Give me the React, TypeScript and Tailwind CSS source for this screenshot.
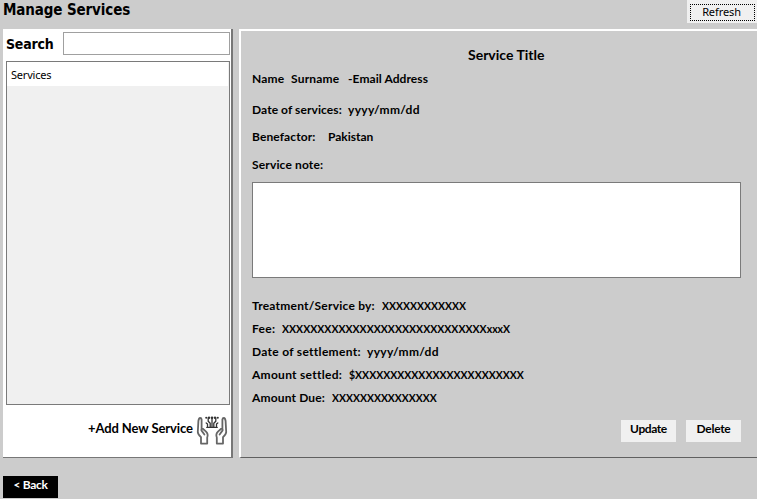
type Part = { text: string; className: string };

function Line({ parts, className }: { parts: Part[]; className: string }) {
  return (
    <div className={`flex whitespace-pre leading-4 ${className}`}>
      {parts.map((p) => (
        <span key={p.text} className={`shrink-0 ${p.className}`}>
          {p.text}
        </span>
      ))}
    </div>
  );
}

function HandsIcon() {
  return (
    <svg width="32" height="32" viewBox="0 0 32 32" fill="none" stroke="#666666" strokeWidth="1.8" strokeLinejoin="round" strokeLinecap="round">
      <path d="M5.6 15V5.4Q5.4 4 4.2 4Q2.8 4.2 2.4 7L1.8 18Q1.8 20 5 23.2V29.6H11.2V23.5Q12.6 20 9.8 17.4L6.8 14.8Q5 14.4 5.4 16.4L8.4 20.5" />
      <path d="M26.4 15V5.4Q26.6 4 27.8 4Q29.2 4.2 29.6 7L30.2 18Q30.2 20 27 23.2V29.6H20.8V23.5Q19.4 20 22.2 17.4L25.2 14.8Q27 14.4 26.6 16.4L23.6 20.5" />
      <g stroke="#333333" strokeWidth="1.3">
        <path d="M10.8 13.4H21.2M11.5 12.6V10L10.2 9M14.2 12.6V9.3L12.2 7.2V3.8M16 12.6V4M17.8 12.6V9.3L19.8 7.2V3.8M20.5 12.6V10L21.8 9" />
      </g>
      <g fill="#333333" stroke="none">
        <circle cx="10.2" cy="3.8" r="1" />
        <circle cx="13" cy="3.8" r="1.2" />
        <circle cx="16" cy="3.8" r="1.3" />
        <circle cx="19" cy="3.8" r="1.2" />
        <circle cx="21.8" cy="3.8" r="1" />
      </g>
    </svg>
  );
}

export default function App() {
  return (
    <div className="flex h-[499px] w-[757px] flex-col overflow-hidden bg-[#cccccc] font-['Lato',sans-serif] text-[12px] font-bold text-black">
      <header className="flex h-[29px] shrink-0 items-start justify-between pl-[3px]">
        <h1 className="whitespace-nowrap font-['DejaVu_Sans_Condensed','DejaVu_Sans',sans-serif] text-[15px] leading-5 font-bold tracking-[-0.12px] [font-stretch:condensed]">Manage Services</h1>
        <button className="h-[23px] w-[70px] bg-[#f0f0f0] pt-[3px] pl-[3px]">
          <span className="-mt-px block h-[17px] w-[65px] border border-dotted border-black pr-[2px] text-center font-['Noto_Sans',sans-serif] text-[11px] leading-[13px] font-normal tracking-[-0.1px]">Refresh</span>
        </button>
      </header>
      <main className="flex h-[429px] shrink-0 pl-[3px]">
        <aside className="flex w-[230px] shrink-0 flex-col border-r-2 border-b border-[#777777] bg-white pl-[3px]">
          <div className="flex h-[32px] items-start pt-[3px]">
            <label className="w-[57px] font-['DejaVu_Sans_Condensed','DejaVu_Sans',sans-serif] text-[14px] leading-6 tracking-[-0.2px] [font-stretch:condensed]">Search</label>
            <input className="h-[23px] w-[167px] border border-[#a0a0a0] bg-white" />
          </div>
          <div className="h-[344px] w-[224px] border border-[#7a7a7a] bg-[#f0f0f0]">
            <div className="h-[24px] w-[221px] bg-white pl-[4px] font-['Noto_Sans',sans-serif] text-[11px] leading-[25px] font-normal tracking-[-0.2px]">Services</div>
          </div>
          <div className="flex h-[50px] items-start pt-[9px] pl-[82px]">
            <span className="w-[108px] whitespace-nowrap pt-[5px] text-[13px] leading-[19px] tracking-[-0.1px]">+Add New Service</span>
            <HandsIcon />
          </div>
        </aside>
        <section className="ml-[6px] w-[518px] shrink-0 border-t-2 border-b border-l-2 border-t-white border-b-[#606060] border-l-white pl-[11px]">
          <h2 className="h-[40px] pt-[14px] pl-[216px] text-[14px] leading-5">Service Title</h2>
          <Line className="h-[31px]" parts={[{ text: "Name", className: "w-[39px] tracking-[0.2px]" }, { text: "Surname", className: "w-[57px] tracking-[0.2px]" }, { text: "-Email Address", className: "tracking-[0.07px]" }]} />
          <Line className="h-[27px]" parts={[{ text: "Date of services:", className: "w-[96px] tracking-[0.08px]" }, { text: "yyyy/mm/dd", className: "tracking-[0.3px]" }]} />
          <Line className="h-[28px]" parts={[{ text: "Benefactor:", className: "w-[76px] tracking-[0.1px]" }, { text: "Pakistan", className: "" }]} />
          <Line className="h-[25px]" parts={[{ text: "Service note:", className: "tracking-[0.15px]" }]} />
          <textarea className="block h-[96px] w-[489px] resize-none border border-[#7a7a7a] bg-white" />
          <div className="pt-[20px]">
            <Line className="h-[23px]" parts={[{ text: "Treatment/Service by:", className: "w-[130px] tracking-[0.22px]" }, { text: "XXXXXXXXXXXX", className: "origin-left scale-x-[0.87]" }]} />
            <Line className="h-[23px]" parts={[{ text: "Fee:", className: "w-[30px] tracking-[0.3px]" }, { text: "XXXXXXXXXXXXXXXXXXXXXXXXXXXXXxxxX", className: "origin-left scale-x-[0.877]" }]} />
            <Line className="h-[23px]" parts={[{ text: "Date of settlement:", className: "w-[115px] tracking-[0.3px]" }, { text: "yyyy/mm/dd", className: "tracking-[0.3px]" }]} />
            <Line className="h-[23px]" parts={[{ text: "Amount settled:", className: "w-[97px] tracking-[0.28px]" }, { text: "$XXXXXXXXXXXXXXXXXXXXXXXX", className: "origin-left scale-x-[0.874]" }]} />
            <Line className="h-[30px]" parts={[{ text: "Amount Due:", className: "w-[80px] tracking-[0.15px]" }, { text: "XXXXXXXXXXXXXXX", className: "origin-left scale-x-[0.868]" }]} />
          </div>
          <div className="flex w-[489px] justify-end gap-[10px]">
            <button className="flex h-[22px] w-[55px] justify-center bg-[#f0f0f0] leading-[17px] tracking-[-0.4px]">Update</button>
            <button className="flex h-[22px] w-[55px] justify-center bg-[#f0f0f0] leading-[17px] tracking-[-0.3px]">Delete</button>
          </div>
        </section>
      </main>
      <footer className="pt-[18px] pl-[3px]">
        <button className="flex h-[22px] w-[55px] justify-center bg-black leading-[17px] tracking-[-0.3px] text-white">&lt; Back</button>
      </footer>
    </div>
  );
}
